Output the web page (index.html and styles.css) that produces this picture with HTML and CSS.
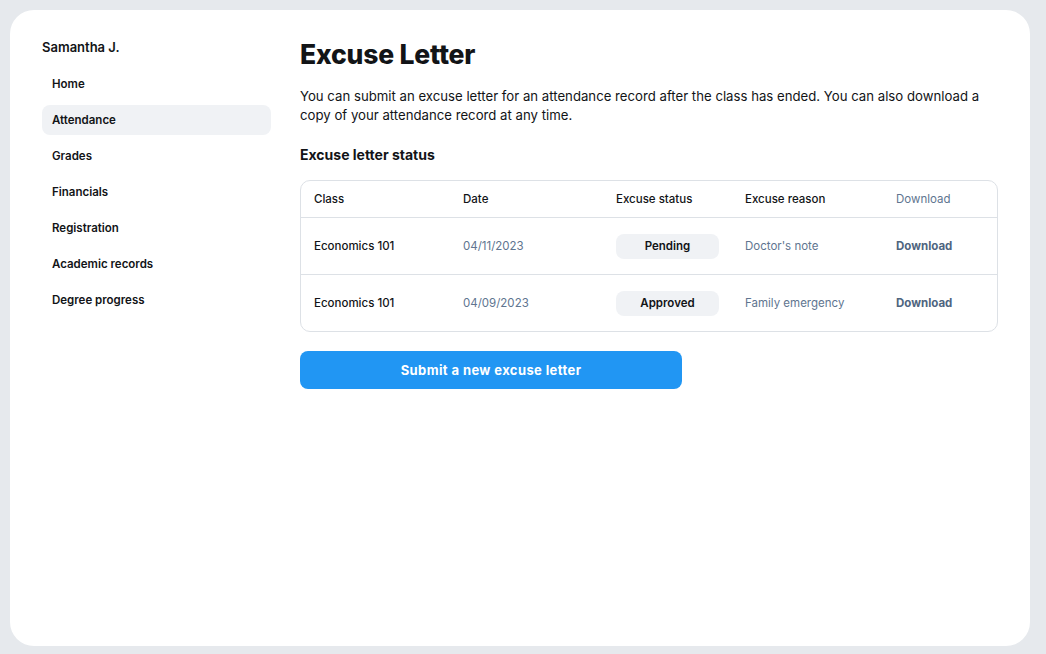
FILE: index.html
```html
<!DOCTYPE html>
<html lang="en">
<head>
<meta charset="utf-8">
<title>Excuse Letter</title>
<link rel="stylesheet" href="styles.css">
</head>
<body>
<div class="card">
  <aside class="sidebar">
    <div class="user">Samantha J.</div>
    <nav class="nav">
      <a class="nav-item">Home</a>
      <a class="nav-item active">Attendance</a>
      <a class="nav-item">Grades</a>
      <a class="nav-item">Financials</a>
      <a class="nav-item">Registration</a>
      <a class="nav-item">Academic records</a>
      <a class="nav-item">Degree progress</a>
    </nav>
  </aside>
  <main class="main">
    <h1 class="title">Excuse Letter</h1>
    <p class="intro">You can submit an excuse letter for an attendance record after the class has ended. You can also download a copy of your attendance record at any time.</p>
    <h2 class="section">Excuse letter status</h2>
    <div class="table">
      <div class="row head">
        <div class="cell">Class</div>
        <div class="cell">Date</div>
        <div class="cell">Excuse status</div>
        <div class="cell">Excuse reason</div>
        <div class="cell muted">Download</div>
      </div>
      <div class="row">
        <div class="cell">Economics 101</div>
        <div class="cell muted">04/11/2023</div>
        <div class="cell"><span class="pill">Pending</span></div>
        <div class="cell muted">Doctor's note</div>
        <div class="cell link">Download</div>
      </div>
      <div class="row">
        <div class="cell">Economics 101</div>
        <div class="cell muted">04/09/2023</div>
        <div class="cell"><span class="pill">Approved</span></div>
        <div class="cell muted">Family emergency</div>
        <div class="cell link">Download</div>
      </div>
    </div>
    <button class="btn">Submit a new excuse letter</button>
  </main>
</div>
</body>
</html>
```
FILE: styles.css
```css
* { box-sizing: border-box; }
html, body { margin: 0; }
body {
  background: #e6e9ed;
  font-family: "Inter", "Noto Sans", sans-serif;
  color: #121417;
  padding: 10px 16px 8px 10px;
  height: 654px;
}
.card {
  background: #fff;
  border-radius: 24px;
  height: 636px;
  display: flex;
  padding: 30px 32px 32px 32px;
  gap: 29px;
}
.sidebar { width: 229px; flex: none; }
.user {
  font-size: 13px;
  font-weight: 600;
  line-height: 14px;
  margin-bottom: 15px;
}
.nav { display: flex; flex-direction: column; gap: 6px; }
.nav-item {
  font-size: 11.5px;
  font-weight: 600;
  line-height: 30px;
  height: 30px;
  padding: 0 10px;
  border-radius: 8px;
  color: #121417;
}
.nav-item.active { background: #f0f2f5; }
.main { flex: 1; min-width: 0; }
.title {
  margin: 0;
  font-size: 26.5px;
  font-weight: 800;
  line-height: 28px;
  letter-spacing: -0.2px;
}
.intro {
  margin: 19px 0 0;
  font-size: 13.2px;
  line-height: 19px;
}
.section {
  margin: 21px 0 0;
  font-size: 14px;
  font-weight: 700;
  line-height: 18px;
}
.table {
  margin-top: 16px;
  border: 1px solid #dde1e6;
  border-radius: 10px;
  overflow: hidden;
}
.row {
  display: grid;
  grid-template-columns: 149px 153px 129px 151px 1fr;
  align-items: center;
  height: 57px;
  border-top: 1px solid #dde1e6;
}
.row.head { height: 36px; border-top: none; }
.cell {
  padding-left: 13px;
  font-size: 11.5px;
  font-weight: 500;
}
.cell.muted { color: #607590; font-weight: 400; }
.row.head .cell { font-weight: 500; }
.row.head .cell.muted { font-weight: 400; }
.cell.link { color: #4f6580; font-weight: 700; }
.pill {
  display: inline-block;
  width: 103px;
  height: 25px;
  line-height: 25px;
  text-align: center;
  background: #f0f2f5;
  border-radius: 8px;
  font-weight: 600;
}
.btn {
  display: block;
  margin-top: 19px;
  width: 382px;
  height: 38px;
  border: none;
  border-radius: 8px;
  background: #2196f3;
  color: #fff;
  font-family: inherit;
  font-size: 13px;
  font-weight: 700;
  letter-spacing: 0.4px;
}
```
